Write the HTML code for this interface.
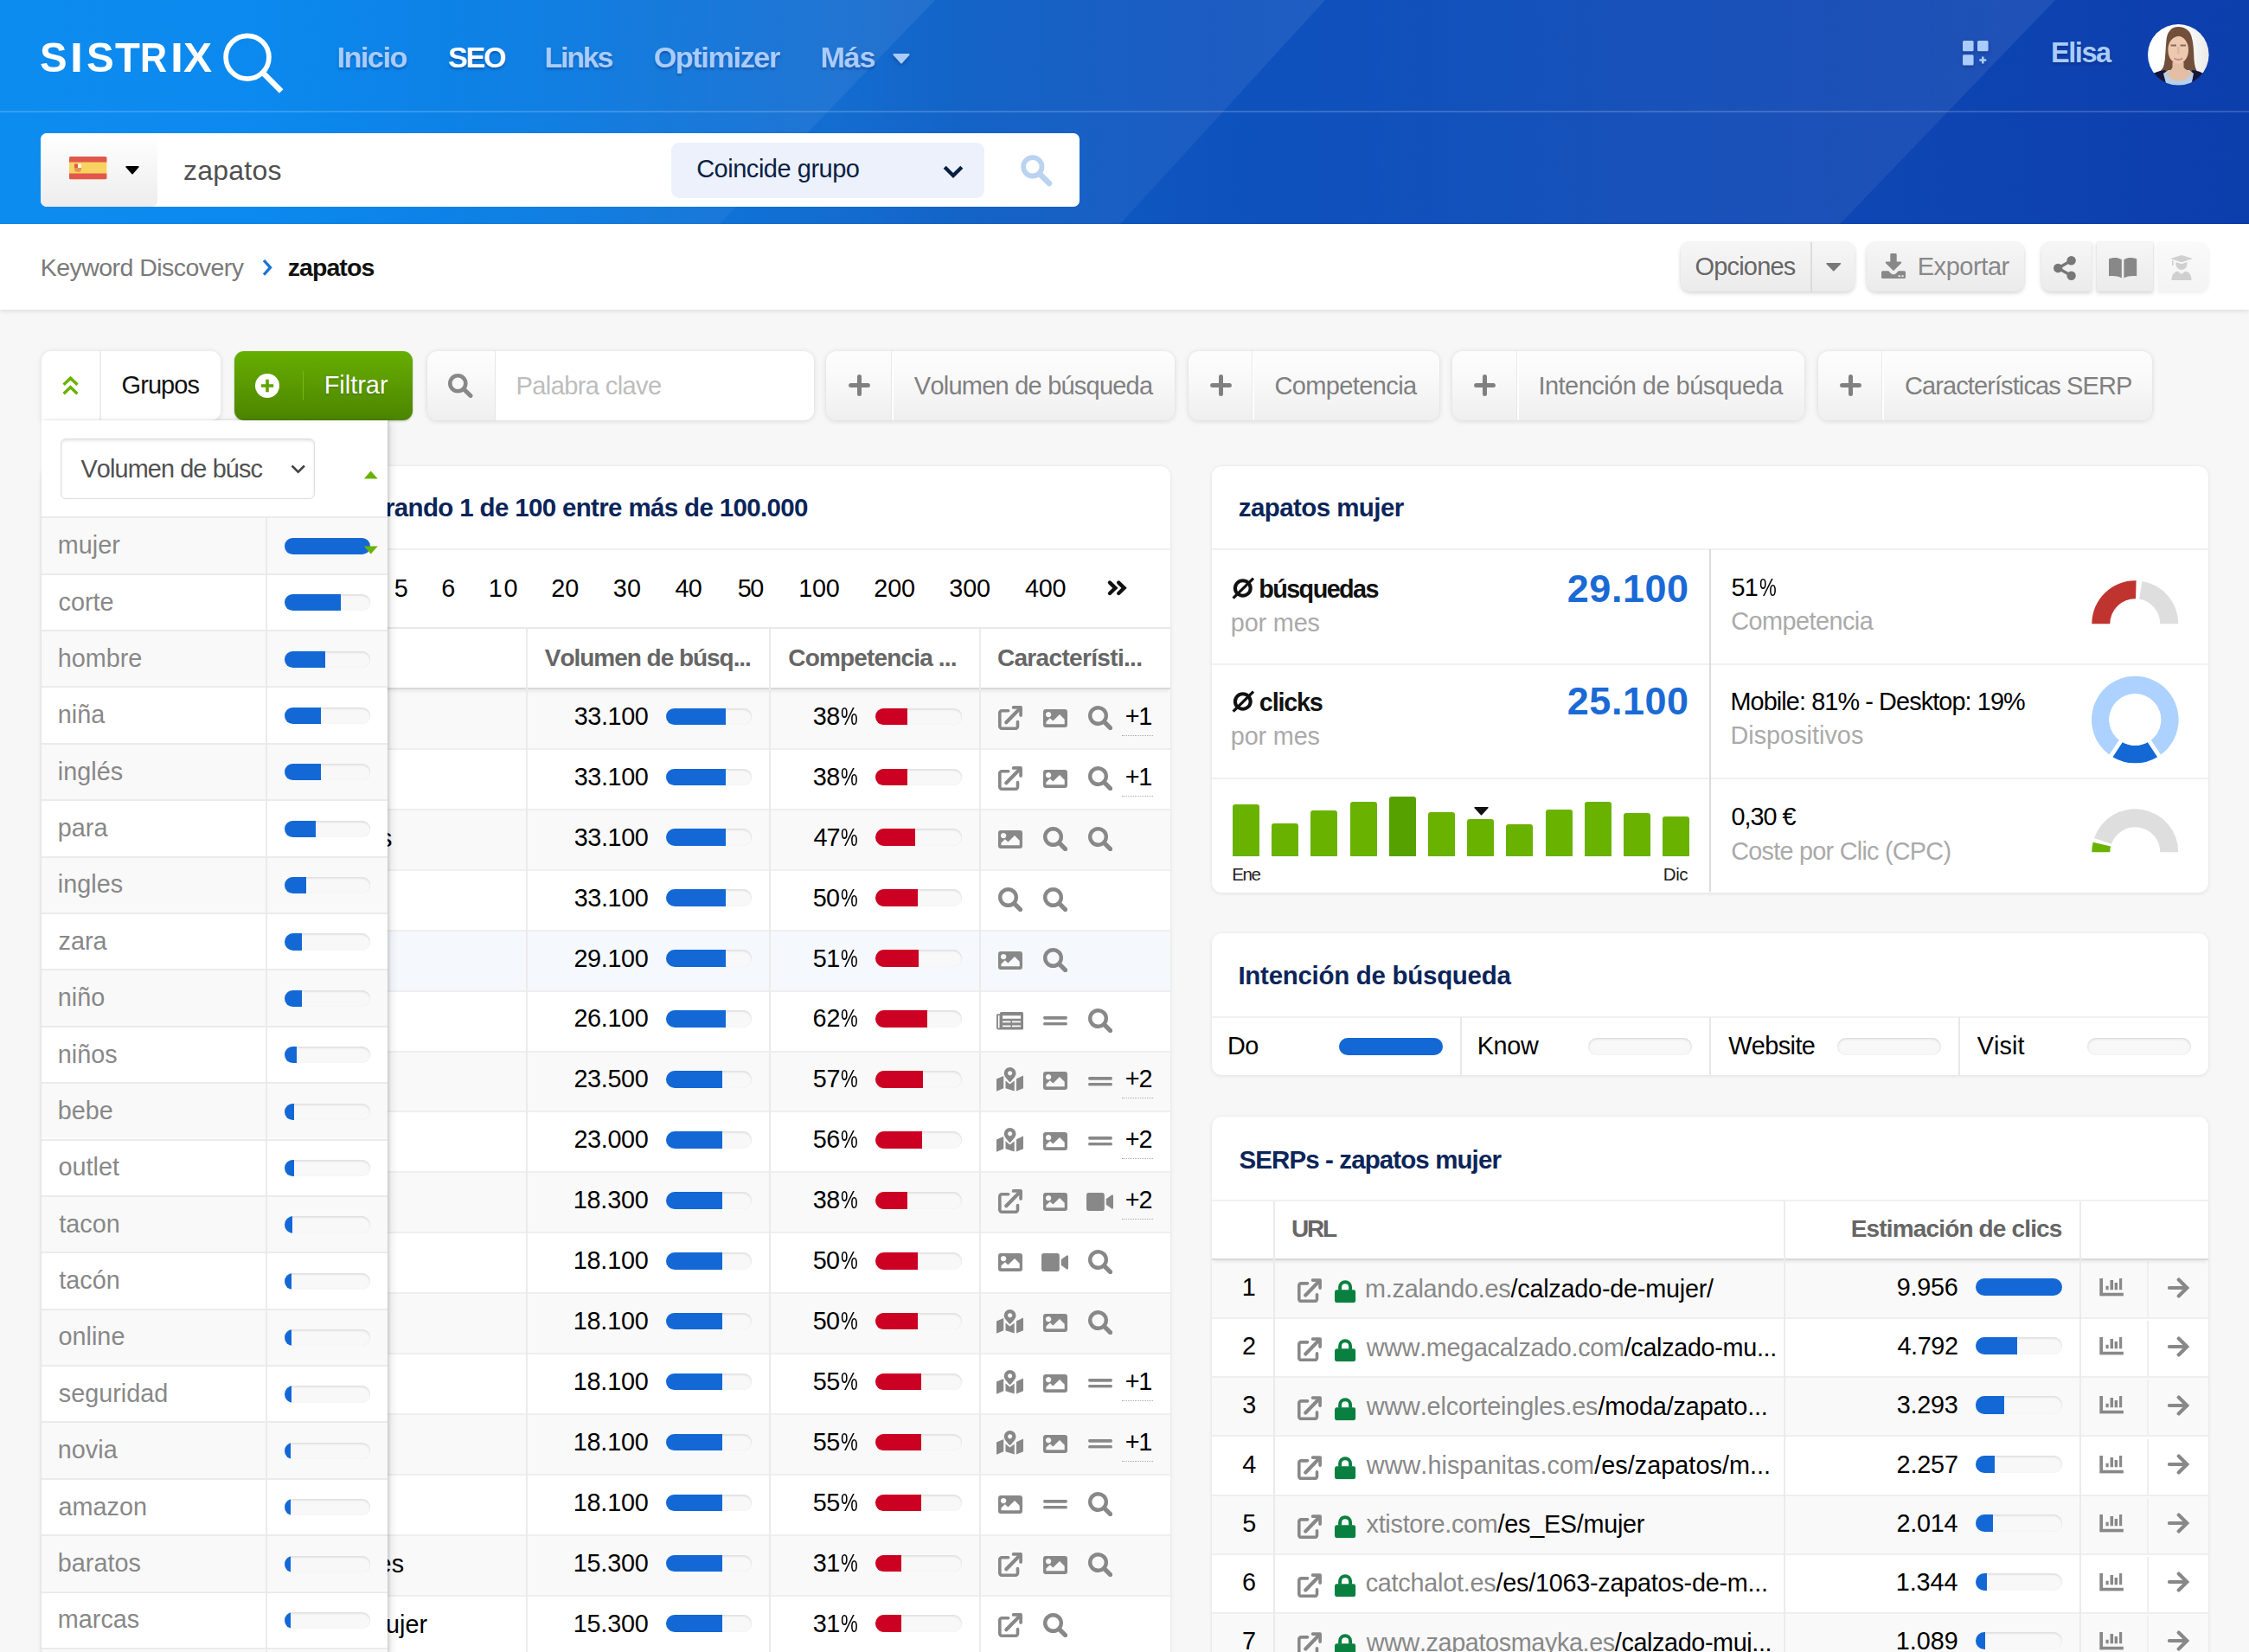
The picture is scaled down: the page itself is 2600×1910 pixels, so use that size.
<!DOCTYPE html>
<html><head><meta charset="utf-8"><title>SISTRIX</title>
<style>

*{box-sizing:border-box;margin:0;padding:0}
html,body{width:2600px;height:1910px;overflow:hidden}
body{background:#f7f7f7;font-family:"Liberation Sans",sans-serif;position:relative;font-kerning:none;color:#000}
.t{position:absolute;white-space:pre;line-height:1}
svg{overflow:visible}
.card{position:absolute;background:#fff;border-radius:11px;box-shadow:0 1px 5px rgba(0,0,0,.09),0 0 1px rgba(0,0,0,.08)}
.btn{position:absolute;border-radius:11px;background:linear-gradient(#f6f6f6,#ebebeb);box-shadow:0 2px 5px rgba(0,0,0,.17),0 0 1px rgba(0,0,0,.15)}
.fbtn{position:absolute;border-radius:12px;background:linear-gradient(#fdfdfd,#f9f9f9 40%,#efefef);box-shadow:0 1px 6px rgba(0,0,0,.13),0 0 1px rgba(0,0,0,.08)}
.bar{position:absolute;border-radius:10px;background:#f8f8f8;box-shadow:inset 0 2px 2px rgba(0,0,0,.085),inset 0 0 1px rgba(0,0,0,.1);overflow:hidden}
.bar i{position:absolute;left:0;top:0;bottom:0;display:block}
.hl{position:absolute;height:2px;background:#ededed}
.vl{position:absolute;width:2px;background:#ededed}

</style></head>
<body>
<svg width="0" height="0" style="position:absolute">
<defs>
<symbol id="ext" viewBox="0 0 28 28"><path d="M11.6 5.7H4.2a2.4 2.4 0 0 0-2.4 2.4v15.7a2.4 2.4 0 0 0 2.4 2.4h15.9a2.4 2.4 0 0 0 2.4-2.4V18.6" fill="none" stroke-width="3.6" stroke-linecap="round"/><path d="M9.3 19.3L24.6 3.6" fill="none" stroke-width="4.2" stroke-linecap="round"/><path d="M17.6 1.9h8.5v9" fill="none" stroke-width="3.7" stroke-linecap="round" stroke-linejoin="round"/></symbol>
<symbol id="img" viewBox="0 0 28 21"><path stroke="none" fill-rule="evenodd" d="M3 0h22a3 3 0 0 1 3 3v15a3 3 0 0 1-3 3H3a3 3 0 0 1-3-3V3a3 3 0 0 1 3-3zM6.1 2.9a3.2 3.2 0 1 0 .01 0zM3.4 17.2V14.6l4.5-4.3 3.5 3.3 7.6-7.5 5.7 5.6v5.5z"/></symbol>
<symbol id="srch" viewBox="0 0 28 28"><circle cx="11.5" cy="11.5" r="9.3" fill="none" stroke-width="4.4"/><path d="M18.6 18.6L25.6 25.6" fill="none" stroke-width="5.2" stroke-linecap="round"/></symbol>
<symbol id="news" viewBox="0 0 31 21"><path stroke="none" fill-rule="evenodd" d="M5.5 0h24a1.5 1.5 0 0 1 1.500 1.500v17.500a1.500 1.500 0 0 1-1.500 1.500H2.200A2.200 2.200 0 0 1 0 18.300V3.700A1.500 1.500 0 0 1 1.500 2.200H4V1.500A1.500 1.500 0 0 1 5.500 0zM1.900 4.100V18a.800.800 0 0 0 1.600 0V4.100zM7 4.300V7.800H28V4.300zM7 10.600V12.300H16.500V10.600zM18 10.600V12.300H28V10.600zM7 15.500V17.200H16.500V15.500zM18 15.500V17.200H28V15.500z"/></symbol>
<symbol id="eq" viewBox="0 0 28 11"><rect stroke="none" x="0" y="0" width="28" height="3.7" rx="1.300"/><rect stroke="none" x="0" y="7.100" width="28" height="3.700" rx="1.300"/></symbol>
<symbol id="map" viewBox="0 0 31 28"><path stroke="none" fill-rule="evenodd" d="M0 13.400L8.200 10V24.300L0 27.800zM10.500 15.600l5 3.800 5.200-3.800V27.600L10.500 24.300zM23 13.200L31 9.600V24.200L23 27.600zM15.600 0a6.900 6.900 0 0 1 6.900 6.900c0 3.300-4 7.300-6.900 10.300C12.700 14.200 8.700 10.200 8.700 6.900A6.900 6.900 0 0 1 15.600 0zM15.600 4.200a2.600 2.600 0 1 0 .01 0z"/></symbol>
<symbol id="vid" viewBox="0 0 31 21"><rect stroke="none" x="0" y="0" width="20.800" height="21" rx="2.800"/><path stroke="none" d="M22.700 7.200L29.300 2.500a1.100 1.100 0 0 1 1.700.9V17.600a1.100 1.100 0 0 1-1.700.9L22.700 13.800z"/></symbol>
<symbol id="chart" viewBox="0 0 28 21"><path stroke="none" d="M0 0H3.800V17.100H28V20.700H0zM7.300 8.900H10.500V13.500H7.300zM12.400 2H16V13.500H12.400zM17.600 5H21.100V13.500H17.600zM23.100 0H26.300V13.500H23.100z"/></symbol>
<symbol id="arrow" viewBox="0 0 25 24"><path d="M2 12H21.500M12.700 2.600L22.300 12L12.700 21.400" fill="none" stroke-width="4.200" stroke-linecap="round" stroke-linejoin="miter"/></symbol>
<symbol id="lock" viewBox="0 0 25 28"><rect stroke="none" x="0" y="12.400" width="24.600" height="15.200" rx="2.500"/><path d="M6.200 13V9.300a6.100 6.100 0 0 1 12.200 0V13" fill="none" stroke-width="4"/></symbol>
<symbol id="plus" viewBox="0 0 25 25"><path d="M12.500 2.600V22.400M2.600 12.500H22.400" fill="none" stroke-width="5" stroke-linecap="round"/></symbol>
</defs></svg>
<div style="position:absolute;left:0;top:0;width:2600px;height:259px;background:linear-gradient(90deg,rgb(13,140,240) 0%,rgb(12,137,238) 12%,rgb(10,125,227) 23%,rgb(18,108,208) 37%,rgb(14,96,198) 42.500%,rgb(14,82,190) 54%,rgb(15,75,183) 73%,rgb(12,62,172) 100%);overflow:hidden">
<svg width="2600" height="259" style="position:absolute;left:0;top:0">
<defs>
<linearGradient id="g1" x1="0" x2="1" y1="0" y2="0"><stop offset="0" stop-color="#fff" stop-opacity="0"/><stop offset="1" stop-color="#fff" stop-opacity=".07"/></linearGradient>
<linearGradient id="g2" x1="0" x2="1" y1="0" y2="0"><stop offset="0" stop-color="#fff" stop-opacity="0"/><stop offset="1" stop-color="#fff" stop-opacity=".075"/></linearGradient>
<linearGradient id="g3" x1="0" x2="1" y1="0" y2="0"><stop offset="0" stop-color="#fff" stop-opacity="0"/><stop offset="1" stop-color="#fff" stop-opacity=".08"/></linearGradient>
</defs>
<polygon points="380,0 1081,0 832,259 380,259" fill="url(#g1)"/>
<polygon points="900,0 1532,0 1295,259 900,259" fill="url(#g2)"/>
<polygon points="1500,0 2376,0 2127,259 1500,259" fill="url(#g3)"/>
</svg>
<div style="position:absolute;left:0;top:128px;width:2600px;height:2px;background:rgba(255,255,255,.17)"></div>
</div>
<span class="t" style="left:46.38px;top:42.36px;font-size:48.6px;font-weight:700;color:#fff;transform-origin:0 0;transform:scaleX(0.9739)">S</span>
<span class="t" style="left:81.30px;top:42.36px;font-size:48.6px;font-weight:700;color:#fff;transform-origin:0 0;transform:scaleX(1.1069)">I</span>
<span class="t" style="left:99.57px;top:42.36px;font-size:48.6px;font-weight:700;color:#fff;transform-origin:0 0;transform:scaleX(0.9808)">S</span>
<span class="t" style="left:132.53px;top:42.36px;font-size:48.6px;font-weight:700;color:#fff;transform-origin:0 0;transform:scaleX(0.9730)">T</span>
<span class="t" style="left:162.21px;top:42.36px;font-size:48.6px;font-weight:700;color:#fff;transform-origin:0 0;transform:scaleX(0.8846)">R</span>
<span class="t" style="left:196.50px;top:42.36px;font-size:48.6px;font-weight:700;color:#fff;transform-origin:0 0;transform:scaleX(1.1069)">I</span>
<span class="t" style="left:212.30px;top:42.36px;font-size:48.6px;font-weight:700;color:#fff;transform-origin:0 0;transform:scaleX(1.0208)">X</span>
<svg style="position:absolute;left:250px;top:30px" width="90" height="90"><circle cx="36" cy="36.200" r="24.900" fill="none" stroke="#fff" stroke-width="5.700"/><path d="M53.600 53.800L75.200 75.600" stroke="#fff" stroke-width="6.400" fill="none"/></svg>
<span class="t" style="left:389.39px;top:49.22px;font-size:34px;font-weight:700;color:#a9ccfc;letter-spacing:-1.388px;text-shadow:0 2px 3px rgba(0,20,90,.35);">Inicio</span>
<span class="t" style="left:517.98px;top:49.22px;font-size:34px;font-weight:700;color:#fff;letter-spacing:-2.195px;text-shadow:0 2px 3px rgba(0,20,90,.35);">SEO</span>
<span class="t" style="left:629.59px;top:49.22px;font-size:34px;font-weight:700;color:#a9ccfc;letter-spacing:-2.242px;text-shadow:0 2px 3px rgba(0,20,90,.35);">Links</span>
<span class="t" style="left:755.64px;top:49.22px;font-size:34px;font-weight:700;color:#a9ccfc;letter-spacing:-1.276px;text-shadow:0 2px 3px rgba(0,20,90,.35);">Optimizer</span>
<span class="t" style="left:948.39px;top:49.22px;font-size:34px;font-weight:700;color:#a9ccfc;letter-spacing:-1.080px;text-shadow:0 2px 3px rgba(0,20,90,.35);">Más</span>
<svg style="position:absolute;left:1032px;top:62px;filter:drop-shadow(0 2px 2px rgba(0,20,90,.3))" width="20" height="12"><path d="M1.500 0H18.500a1 1 0 0 1 .8 1.700L10.800 11.200a1.100 1.100 0 0 1-1.600 0L.7 1.700A1 1 0 0 1 1.500 0z" fill="#a9ccfc"/></svg>
<svg style="position:absolute;left:2268.800px;top:46.700px;filter:drop-shadow(0 2px 2px rgba(0,20,90,.3))" width="31" height="29" fill="#a9ccfc"><rect x="0" y="0" width="12.600" height="12.300" rx="1.500"/><rect x="17" y="0" width="12.600" height="12.300" rx="1.500"/><rect x="0" y="16.300" width="12.600" height="12.300" rx="1.500"/><path d="M23.300 18.500V26.500M19.300 22.500H27.300" stroke="#a9ccfc" stroke-width="2.600" fill="none"/></svg>
<span class="t" style="left:2370.89px;top:44.69px;font-size:32.5px;font-weight:700;color:#a9ccfc;letter-spacing:-1.400px;text-shadow:0 2px 3px rgba(0,20,90,.35);">Elisa</span>
<svg style="position:absolute;left:2482.500px;top:27.700px" width="70.600" height="70.600" viewBox="0 0 70.600 70.600">
<defs><filter id="avbl"><feGaussianBlur stdDeviation=".55"/></filter><clipPath id="avc"><circle cx="35.300" cy="35.300" r="35.300"/></clipPath>
<linearGradient id="avbg" x1="0" x2="1"><stop offset="0" stop-color="#fff"/><stop offset=".6" stop-color="#fdfdfd"/><stop offset="1" stop-color="#e9e9e9"/></linearGradient></defs>
<g clip-path="url(#avc)"><g filter="url(#avbl)">
<rect width="71" height="71" fill="url(#avbg)"/>
<path d="M35.500 3C27 3 22.500 9 21.500 18C20.500 28 20.500 38 19 46C18 51 15 54 12 56L28 60L45 60L58 56C55.500 53 54 48 53.500 41C53 31 53 22 50.500 14C48.500 7 43 3 35.500 3z" fill="#72503a"/>
<path d="M6 57C11 54.500 16 53.500 20 53L31 70H4z" fill="#15163a"/>
<path d="M64 57C60 54.500 55 53.500 51.500 53L42 70H67z" fill="#15163a"/>
<path d="M18 57L24 53L48 53L53 57L50 72H22z" fill="#b9d0ea"/>
<path d="M28.500 44H41.500V50C44 53 48 54.500 51 56C48 62 42 65.500 35 65.500C29 65.500 24 62 21 56.500C24 55 27 53.500 28.500 50z" fill="#e3bfa5"/>
<ellipse cx="35.200" cy="29.700" rx="11.800" ry="16" fill="#ecc9b0"/>
<path d="M23 24C24 15 29 11.500 35.500 11.500C41 11.500 46 15 47.500 24C46 18 42 14.500 36 13.500C30 14.500 25 18 23 24z" fill="#72503a"/>
<path d="M26.500 24.600h6.500M37.500 24.600h6.500" stroke="#7a5a48" stroke-width="2" opacity=".85"/><path d="M35.200 26V34.500" stroke="#d9b095" stroke-width="2.500" opacity=".7"/>
<path d="M30.500 39.500Q35.300 42.500 40 39.500" stroke="#d08a8a" stroke-width="2" fill="none"/>
</g></g></svg>
<div style="position:absolute;left:47px;top:154px;width:1201px;height:84.6px;background:#fff;border-radius:7px;overflow:hidden"><div style="position:absolute;left:0;top:0;width:134.500px;height:100%;background:linear-gradient(#fff,#f7f7f7 45%,#ededed);border-radius:7px"></div></div>
<svg style="position:absolute;left:80px;top:181.200px" width="43.400" height="26.200"><rect width="43.400" height="26.200" rx="1.500" fill="#f9d360"/><path d="M1.500 0H41.900a1.500 1.500 0 0 1 1.500 1.500V6.600H0V1.500A1.500 1.500 0 0 1 1.500 0zM0 19.600H43.400V24.700a1.500 1.500 0 0 1-1.500 1.500H1.500A1.500 1.500 0 0 1 0 24.700z" fill="#e2574c"/><path d="M6 8.500h4v4.500h-4z" fill="#e2574c"/><path d="M10 8.500h4v4.500h-4z" fill="#fff" opacity=".85"/><path d="M6 13h8v1.500a4 3.600 0 0 1-8 0z" fill="#e8954a"/></svg>
<svg style="position:absolute;left:145.400px;top:192.200px" width="16" height="10"><path d="M1 0H15a.8.800 0 0 1 .6 1.300L8.600 9.200a.8.800 0 0 1-1.200 0L.4 1.300A.8.800 0 0 1 1 0z" fill="#000"/></svg>
<span class="t" style="left:212.02px;top:181.01px;font-size:32px;color:#505050;letter-spacing:0.233px;">zapatos</span>
<div style="position:absolute;left:776px;top:165px;width:362.4px;height:63.5px;background:#ecf1fb;border-radius:9px"></div>
<span class="t" style="left:805.15px;top:180.65px;font-size:29px;color:#0a1f44;letter-spacing:-0.479px;">Coincide grupo</span>
<svg style="position:absolute;left:1090px;top:191px" width="24" height="15"><path d="M2.200 2.200L12 12L21.800 2.200" fill="none" stroke="#0a1f44" stroke-width="4.300"/></svg>
<svg style="position:absolute;left:1180px;top:179px" width="36" height="36"><circle cx="13.800" cy="13.800" r="10.700" fill="none" stroke="#b9d3f0" stroke-width="5.800"/><path d="M22.300 22.300L33 33" stroke="#b9d3f0" stroke-width="6.600" stroke-linecap="round" fill="none"/></svg>
<div style="position:absolute;left:0px;top:259px;width:2600px;height:99px;background:#fff;box-shadow:0 2px 5px rgba(0,0,0,.10)"></div>
<span class="t" style="left:46.72px;top:295.27px;font-size:28.5px;color:#7a7a7a;letter-spacing:-0.537px;">Keyword Discovery</span>
<svg style="position:absolute;left:302.600px;top:299px" width="12" height="21"><path d="M2 2L9.500 10.300L2 18.600" fill="none" stroke="#1a73d6" stroke-width="3.300"/></svg>
<span class="t" style="left:332.66px;top:295.27px;font-size:28.5px;font-weight:700;color:#111;letter-spacing:-0.923px;">zapatos</span>
<div class="btn" style="left:1943px;top:279.500px;width:201.300px;height:57.300px"><div style="position:absolute;left:150px;top:0;width:1.500px;height:100%;background:#dcdcdc"></div></div>
<span class="t" style="left:1959.39px;top:293.95px;font-size:29px;color:#666;letter-spacing:-0.794px;">Opciones</span>
<svg style="position:absolute;left:2110.700px;top:304.400px" width="18" height="10"><path d="M1 0H16.500a.8.800 0 0 1 .6 1.300L9.400 9.200a.8.800 0 0 1-1.200 0L.4 1.300A.8.800 0 0 1 1 0z" fill="#777"/></svg>
<div class="btn" style="left:2158.300px;top:279.500px;width:182px;height:57.300px"></div>
<svg style="position:absolute;left:2174.800px;top:293px" width="28" height="29" fill="#888"><path d="M11.500 0h5a1.200 1.200 0 0 1 1.200 1.200V9.500h4.600a1 1 0 0 1 .7 1.700L14.700 19.600a1 1 0 0 1-1.400 0L5 11.200a1 1 0 0 1 .7-1.700H10.300V1.200A1.200 1.200 0 0 1 11.500 0z"/><path fill-rule="evenodd" d="M1.500 20.300H8.300l2.600 2.600a4.400 4.400 0 0 0 6.200 0l2.600-2.600H26.500A1.500 1.500 0 0 1 28 21.800V27.500A1.500 1.500 0 0 1 26.500 29H1.500A1.500 1.500 0 0 1 0 27.500V21.800a1.500 1.500 0 0 1 1.500-1.500zM19.600 25.200v2h2.200v-2zM23.400 25.200v2h2.200v-2z"/></svg>
<span class="t" style="left:2216.68px;top:293.95px;font-size:29px;color:#888;letter-spacing:-0.431px;">Exportar</span>
<div class="btn" style="left:2360px;top:279.500px;width:57.600px;height:57.300px;border-radius:11px 0 0 11px"></div>
<div class="btn" style="left:2423.800px;top:279.500px;width:65.400px;height:57.300px;border-radius:0"></div>
<div class="btn" style="left:2495.400px;top:279.500px;width:58px;height:57.300px;border-radius:0 11px 11px 0;background:linear-gradient(#fafafa,#f4f4f4);box-shadow:0 2px 4px rgba(0,0,0,.07),0 0 1px rgba(0,0,0,.08)"></div>
<svg style="position:absolute;left:2373.700px;top:295.700px" width="26" height="28" fill="#777" stroke="#777"><circle cx="20.600" cy="5.200" r="5.200" stroke="none"/><circle cx="5.200" cy="14" r="5.200" stroke="none"/><circle cx="20.600" cy="22.800" r="5.200" stroke="none"/><path d="M20.600 5.200L5.200 14L20.600 22.800" fill="none" stroke-width="3.300"/></svg>
<svg style="position:absolute;left:2438.400px;top:297px" width="32.200" height="24.500" fill="#888"><path d="M0 2.300C4 .6 10 .1 14.800 3V24.500C10 21.800 4 21.600 0 22.300zM32.200 2.300C28.200.6 22.200.1 17.400 3V24.500C22.200 21.800 28.200 21.600 32.200 22.300z"/></svg>
<svg style="position:absolute;left:2509.400px;top:295px" width="26" height="29" fill="#d0d0d0"><path d="M13 0L26 4L13 8.200L0 4z"/><path d="M2 6V12H3.600V6.500z"/><path d="M6.500 8V10.500a6.500 6.500 0 0 0 13 0V8L13 10.200z"/><path d="M1.500 29C1.500 23 4 19.500 8.500 18.500L13 22L17.500 18.500C22 19.500 24.500 23 24.500 29z"/></svg>
<div class="btn" style="left:47.500px;top:406px;width:207.500px;height:79.5px;background:#fff;border-radius:11px 11px 11px 0;box-shadow:0 1px 6px rgba(0,0,0,.13)"><div style="position:absolute;left:67.500px;top:0;width:1.500px;height:100%;background:#eee"></div></div>
<svg style="position:absolute;left:71.500px;top:434.500px" width="19" height="23"><path d="M1.600 9.800L9.500 2.200L17.400 9.800M1.600 20.300L9.500 12.700L17.400 20.300" fill="none" stroke="#6ab200" stroke-width="3.400"/></svg>
<span class="t" style="left:140.55px;top:431.15px;font-size:29px;color:#111;letter-spacing:-0.931px;">Grupos</span>
<div style="position:absolute;left:271.400px;top:406px;width:206.100px;height:79.5px;border-radius:11px;background:linear-gradient(#66ae00,#5a9900 50%,#4c8400);box-shadow:0 1px 3px rgba(0,0,0,.2)"><div style="position:absolute;left:78.500px;top:23px;width:1.500px;height:33px;background:rgba(120,190,20,.9)"></div></div>
<svg style="position:absolute;left:295px;top:432px" width="28" height="28"><circle cx="14" cy="14" r="14" fill="#fff"/><path d="M14 6.800V21.200M6.800 14H21.200" stroke="#5fa300" stroke-width="3.600" fill="none"/></svg>
<span class="t" style="left:374.68px;top:431.15px;font-size:29px;color:#fff;letter-spacing:-0.033px;text-shadow:0 1px 2px rgba(0,0,0,.25);">Filtrar</span>
<div class="fbtn" style="left:494px;top:406px;width:446.500px;height:79.5px;overflow:hidden"><div style="position:absolute;left:79px;top:0;right:0;height:100%;background:#fff;box-shadow:-1px 0 0 #e6e6e6"></div></div>
<svg style="position:absolute;left:518px;top:432px" width="30" height="28"><circle cx="11.300" cy="11.300" r="9" fill="none" stroke="#888" stroke-width="4.600"/><path d="M18.200 18L26 25.500" stroke="#888" stroke-width="5.200" stroke-linecap="round" fill="none"/></svg>
<span class="t" style="left:596.48px;top:431.95px;font-size:29px;color:#bdbdbd;letter-spacing:-0.585px;">Palabra clave</span>
<div class="fbtn" style="left:955.2px;top:406px;width:402.5999999999999px;height:79.5px"><div style="position:absolute;left:75.79999999999995px;top:0;width:2px;height:100%;background:#fff;box-shadow:-1px 0 0 #e8e8e8"></div></div>
<svg style="position:absolute;left:981.10px;top:433.30px;" width="25" height="25" fill="#808080" stroke="#808080"><use href="#plus"/></svg>
<span class="t" style="left:1056.86px;top:431.95px;font-size:29px;color:#808080;letter-spacing:-0.778px;">Volumen de búsqueda</span>
<div class="fbtn" style="left:1373.7px;top:406px;width:290.29999999999995px;height:79.5px"><div style="position:absolute;left:74.29999999999995px;top:0;width:2px;height:100%;background:#fff;box-shadow:-1px 0 0 #e8e8e8"></div></div>
<svg style="position:absolute;left:1398.85px;top:433.30px;" width="25" height="25" fill="#808080" stroke="#808080"><use href="#plus"/></svg>
<span class="t" style="left:1473.45px;top:431.95px;font-size:29px;color:#808080;letter-spacing:-0.612px;">Competencia</span>
<div class="fbtn" style="left:1678.7px;top:406px;width:407.29999999999995px;height:79.5px"><div style="position:absolute;left:75.29999999999995px;top:0;width:2px;height:100%;background:#fff;box-shadow:-1px 0 0 #e8e8e8"></div></div>
<svg style="position:absolute;left:1704.35px;top:433.30px;" width="25" height="25" fill="#808080" stroke="#808080"><use href="#plus"/></svg>
<span class="t" style="left:1778.39px;top:431.95px;font-size:29px;color:#808080;letter-spacing:-0.529px;">Intención de búsqueda</span>
<div class="fbtn" style="left:2102px;top:406px;width:386px;height:79.5px"><div style="position:absolute;left:74px;top:0;width:2px;height:100%;background:#fff;box-shadow:-1px 0 0 #e8e8e8"></div></div>
<svg style="position:absolute;left:2127.00px;top:433.30px;" width="25" height="25" fill="#808080" stroke="#808080"><use href="#plus"/></svg>
<span class="t" style="left:2201.95px;top:431.95px;font-size:29px;color:#808080;letter-spacing:-0.899px;">Características SERP</span>
<div class="card" style="left:47.5px;top:538.500px;width:1305.8px;height:1420px"></div>
<span class="t" style="left:378.79px;top:572.23px;font-size:29.5px;font-weight:700;color:#0b2559;letter-spacing:-0.653px;">Mostrando 1 de 100 entre más de 100.000</span>
<div class="hl" style="left:47.5px;top:633.500px;width:1305.8px;background:#f1f1f1"></div>
<span class="t" style="left:455.65px;top:665.62px;font-size:28.8px;">5</span>
<span class="t" style="left:510.26px;top:665.62px;font-size:28.8px;">6</span>
<span class="t" style="left:564.84px;top:665.62px;font-size:28.8px;letter-spacing:1.700px;">10</span>
<span class="t" style="left:637.36px;top:665.62px;font-size:28.8px;letter-spacing:-0.020px;">20</span>
<span class="t" style="left:708.85px;top:665.62px;font-size:28.8px;letter-spacing:0.192px;">30</span>
<span class="t" style="left:780.42px;top:665.62px;font-size:28.8px;letter-spacing:-0.584px;">40</span>
<span class="t" style="left:852.75px;top:665.62px;font-size:28.8px;letter-spacing:-1.408px;">50</span>
<span class="t" style="left:923.14px;top:665.62px;font-size:28.8px;letter-spacing:-0.142px;">100</span>
<span class="t" style="left:1010.36px;top:665.62px;font-size:28.8px;letter-spacing:-0.202px;">200</span>
<span class="t" style="left:1097.35px;top:665.62px;font-size:28.8px;letter-spacing:-0.146px;">300</span>
<span class="t" style="left:1185.12px;top:665.62px;font-size:28.8px;letter-spacing:-0.334px;">400</span>
<svg style="position:absolute;left:1279.600px;top:671px" width="23" height="18"><path d="M3 2.600L9.400 8.800L3 15M13.200 2.600L19.600 8.800L13.200 15" fill="none" stroke="#111" stroke-width="4.400" stroke-linecap="round" stroke-linejoin="miter"/></svg>
<div class="hl" style="left:47.5px;top:725px;width:1305.8px;background:#e9e9e9"></div>
<span class="t" style="left:629.86px;top:747.10px;font-size:28px;font-weight:700;color:#666;letter-spacing:-1.039px;">Volumen de búsq...</span>
<span class="t" style="left:911.28px;top:747.10px;font-size:28px;font-weight:700;color:#666;letter-spacing:-0.834px;">Competencia ...</span>
<span class="t" style="left:1152.88px;top:747.10px;font-size:28px;font-weight:700;color:#666;letter-spacing:-0.663px;">Característi...</span>
<div style="position:absolute;left:47.5px;top:797.0px;width:1305.8px;height:69.92px;background:#f9f9f9;border-bottom:2px solid #efefef"></div>
<span class="t" style="left:663.75px;top:813.82px;font-size:28.8px;letter-spacing:-0.405px;">33.100</span>
<div class="bar" style="left:770px;top:818.6px;width:99px;height:19.700px"><i style="width:69.4px;background:#1368d6"></i></div>
<span class="t" style="left:939.85px;top:813.82px;font-size:28.8px;letter-spacing:-0.664px;">38</span>
<span class="t" style="left:972.02px;top:813.82px;font-size:28.8px;color:#000;transform-origin:0 0;transform:scaleX(0.7707)">%</span>
<div class="bar" style="left:1012.300px;top:818.6px;width:99.400px;height:19.700px"><i style="width:36.8px;background:#cc0022"></i></div>
<svg style="position:absolute;left:1153.60px;top:816.10px;" width="28" height="28" fill="#888" stroke="#888"><use href="#ext"/></svg>
<svg style="position:absolute;left:1205.60px;top:819.90px;" width="28" height="21" fill="#888" stroke="#888"><use href="#img"/></svg>
<svg style="position:absolute;left:1257.60px;top:816.10px;" width="28" height="28" fill="#888" stroke="#888"><use href="#srch"/></svg>
<span class="t" style="left:1300.86px;top:813.82px;font-size:28.8px;letter-spacing:-1.396px;">+1</span>
<div style="position:absolute;left:1297px;top:849.7px;width:36px;height:0;border-top:1.500px dotted #aaa"></div>
<div style="position:absolute;left:47.5px;top:866.9px;width:1305.8px;height:69.92px;background:#fff;border-bottom:2px solid #efefef"></div>
<span class="t" style="left:663.75px;top:883.74px;font-size:28.8px;letter-spacing:-0.405px;">33.100</span>
<div class="bar" style="left:770px;top:888.5px;width:99px;height:19.700px"><i style="width:69.4px;background:#1368d6"></i></div>
<span class="t" style="left:939.85px;top:883.74px;font-size:28.8px;letter-spacing:-0.664px;">38</span>
<span class="t" style="left:972.02px;top:883.74px;font-size:28.8px;color:#000;transform-origin:0 0;transform:scaleX(0.7707)">%</span>
<div class="bar" style="left:1012.300px;top:888.5px;width:99.400px;height:19.700px"><i style="width:36.8px;background:#cc0022"></i></div>
<svg style="position:absolute;left:1153.60px;top:886.02px;" width="28" height="28" fill="#888" stroke="#888"><use href="#ext"/></svg>
<svg style="position:absolute;left:1205.60px;top:889.82px;" width="28" height="21" fill="#888" stroke="#888"><use href="#img"/></svg>
<svg style="position:absolute;left:1257.60px;top:886.02px;" width="28" height="28" fill="#888" stroke="#888"><use href="#srch"/></svg>
<span class="t" style="left:1300.86px;top:883.74px;font-size:28.8px;letter-spacing:-1.396px;">+1</span>
<div style="position:absolute;left:1297px;top:919.6px;width:36px;height:0;border-top:1.500px dotted #aaa"></div>
<div style="position:absolute;left:47.5px;top:936.8px;width:1305.8px;height:69.92px;background:#f9f9f9;border-bottom:2px solid #efefef"></div>
<span class="t" style="left:663.75px;top:953.66px;font-size:28.8px;letter-spacing:-0.405px;">33.100</span>
<div class="bar" style="left:770px;top:958.4px;width:99px;height:19.700px"><i style="width:69.4px;background:#1368d6"></i></div>
<span class="t" style="left:940.42px;top:953.66px;font-size:28.8px;letter-spacing:-0.952px;">47</span>
<span class="t" style="left:972.02px;top:953.66px;font-size:28.8px;color:#000;transform-origin:0 0;transform:scaleX(0.7707)">%</span>
<div class="bar" style="left:1012.300px;top:958.4px;width:99.400px;height:19.700px"><i style="width:45.5px;background:#cc0022"></i></div>
<svg style="position:absolute;left:1153.60px;top:959.74px;" width="28" height="21" fill="#888" stroke="#888"><use href="#img"/></svg>
<svg style="position:absolute;left:1205.60px;top:955.94px;" width="28" height="28" fill="#888" stroke="#888"><use href="#srch"/></svg>
<svg style="position:absolute;left:1257.60px;top:955.94px;" width="28" height="28" fill="#888" stroke="#888"><use href="#srch"/></svg>
<span class="t" style="left:439.11px;top:955.36px;font-size:28.8px;">s</span>
<div style="position:absolute;left:47.5px;top:1006.8px;width:1305.8px;height:69.92px;background:#fff;border-bottom:2px solid #efefef"></div>
<span class="t" style="left:663.75px;top:1023.58px;font-size:28.8px;letter-spacing:-0.405px;">33.100</span>
<div class="bar" style="left:770px;top:1028.4px;width:99px;height:19.700px"><i style="width:69.4px;background:#1368d6"></i></div>
<span class="t" style="left:939.85px;top:1023.58px;font-size:28.8px;letter-spacing:-0.808px;">50</span>
<span class="t" style="left:972.02px;top:1023.58px;font-size:28.8px;color:#000;transform-origin:0 0;transform:scaleX(0.7707)">%</span>
<div class="bar" style="left:1012.300px;top:1028.4px;width:99.400px;height:19.700px"><i style="width:48.4px;background:#cc0022"></i></div>
<svg style="position:absolute;left:1153.60px;top:1025.86px;" width="28" height="28" fill="#888" stroke="#888"><use href="#srch"/></svg>
<svg style="position:absolute;left:1205.60px;top:1025.86px;" width="28" height="28" fill="#888" stroke="#888"><use href="#srch"/></svg>
<div style="position:absolute;left:47.5px;top:1076.7px;width:1305.8px;height:69.92px;background:#f5f8fc;border-bottom:2px solid #efefef"></div>
<span class="t" style="left:663.46px;top:1093.50px;font-size:28.8px;letter-spacing:-0.347px;">29.100</span>
<div class="bar" style="left:770px;top:1098.3px;width:99px;height:19.700px"><i style="width:69.4px;background:#1368d6"></i></div>
<span class="t" style="left:939.85px;top:1093.50px;font-size:28.8px;letter-spacing:-0.520px;">51</span>
<span class="t" style="left:972.02px;top:1093.50px;font-size:28.8px;color:#000;transform-origin:0 0;transform:scaleX(0.7707)">%</span>
<div class="bar" style="left:1012.300px;top:1098.3px;width:99.400px;height:19.700px"><i style="width:49.4px;background:#cc0022"></i></div>
<svg style="position:absolute;left:1153.60px;top:1099.58px;" width="28" height="21" fill="#888" stroke="#888"><use href="#img"/></svg>
<svg style="position:absolute;left:1205.60px;top:1095.78px;" width="28" height="28" fill="#888" stroke="#888"><use href="#srch"/></svg>
<div style="position:absolute;left:47.5px;top:1146.6px;width:1305.8px;height:69.92px;background:#fff;border-bottom:2px solid #efefef"></div>
<span class="t" style="left:663.46px;top:1163.42px;font-size:28.8px;letter-spacing:-0.347px;">26.100</span>
<div class="bar" style="left:770px;top:1168.2px;width:99px;height:19.700px"><i style="width:69px;background:#1368d6"></i></div>
<span class="t" style="left:939.56px;top:1163.42px;font-size:28.8px;letter-spacing:-0.088px;">62</span>
<span class="t" style="left:972.02px;top:1163.42px;font-size:28.8px;color:#000;transform-origin:0 0;transform:scaleX(0.7707)">%</span>
<div class="bar" style="left:1012.300px;top:1168.2px;width:99.400px;height:19.700px"><i style="width:60.0px;background:#cc0022"></i></div>
<svg style="position:absolute;left:1152.10px;top:1169.50px;" width="31" height="21" fill="#888" stroke="#888"><use href="#news"/></svg>
<svg style="position:absolute;left:1205.60px;top:1174.60px;" width="28" height="10.8" fill="#888" stroke="#888"><use href="#eq"/></svg>
<svg style="position:absolute;left:1257.60px;top:1165.70px;" width="28" height="28" fill="#888" stroke="#888"><use href="#srch"/></svg>
<div style="position:absolute;left:47.5px;top:1216.5px;width:1305.8px;height:69.92px;background:#f9f9f9;border-bottom:2px solid #efefef"></div>
<span class="t" style="left:663.46px;top:1233.34px;font-size:28.8px;letter-spacing:-0.347px;">23.500</span>
<div class="bar" style="left:770px;top:1238.1px;width:99px;height:19.700px"><i style="width:65px;background:#1368d6"></i></div>
<span class="t" style="left:939.85px;top:1233.34px;font-size:28.8px;letter-spacing:-0.376px;">57</span>
<span class="t" style="left:972.02px;top:1233.34px;font-size:28.8px;color:#000;transform-origin:0 0;transform:scaleX(0.7707)">%</span>
<div class="bar" style="left:1012.300px;top:1238.1px;width:99.400px;height:19.700px"><i style="width:55.2px;background:#cc0022"></i></div>
<svg style="position:absolute;left:1152.10px;top:1234.42px;" width="31" height="28" fill="#888" stroke="#888"><use href="#map"/></svg>
<svg style="position:absolute;left:1205.60px;top:1239.42px;" width="28" height="21" fill="#888" stroke="#888"><use href="#img"/></svg>
<svg style="position:absolute;left:1257.60px;top:1244.52px;" width="28" height="10.8" fill="#888" stroke="#888"><use href="#eq"/></svg>
<span class="t" style="left:1300.86px;top:1233.34px;font-size:28.8px;letter-spacing:-1.252px;">+2</span>
<div style="position:absolute;left:1297px;top:1269.2px;width:36px;height:0;border-top:1.500px dotted #aaa"></div>
<div style="position:absolute;left:47.5px;top:1286.4px;width:1305.8px;height:69.92px;background:#fff;border-bottom:2px solid #efefef"></div>
<span class="t" style="left:663.46px;top:1303.26px;font-size:28.8px;letter-spacing:-0.347px;">23.000</span>
<div class="bar" style="left:770px;top:1308.0px;width:99px;height:19.700px"><i style="width:65px;background:#1368d6"></i></div>
<span class="t" style="left:939.85px;top:1303.26px;font-size:28.8px;letter-spacing:-0.664px;">56</span>
<span class="t" style="left:972.02px;top:1303.26px;font-size:28.8px;color:#000;transform-origin:0 0;transform:scaleX(0.7707)">%</span>
<div class="bar" style="left:1012.300px;top:1308.0px;width:99.400px;height:19.700px"><i style="width:54.2px;background:#cc0022"></i></div>
<svg style="position:absolute;left:1152.10px;top:1304.34px;" width="31" height="28" fill="#888" stroke="#888"><use href="#map"/></svg>
<svg style="position:absolute;left:1205.60px;top:1309.34px;" width="28" height="21" fill="#888" stroke="#888"><use href="#img"/></svg>
<svg style="position:absolute;left:1257.60px;top:1314.44px;" width="28" height="10.8" fill="#888" stroke="#888"><use href="#eq"/></svg>
<span class="t" style="left:1300.86px;top:1303.26px;font-size:28.8px;letter-spacing:-1.252px;">+2</span>
<div style="position:absolute;left:1297px;top:1339.1px;width:36px;height:0;border-top:1.500px dotted #aaa"></div>
<div style="position:absolute;left:47.5px;top:1356.4px;width:1305.8px;height:69.92px;background:#f9f9f9;border-bottom:2px solid #efefef"></div>
<span class="t" style="left:662.74px;top:1373.18px;font-size:28.8px;letter-spacing:-0.203px;">18.300</span>
<div class="bar" style="left:770px;top:1378.0px;width:99px;height:19.700px"><i style="width:65px;background:#1368d6"></i></div>
<span class="t" style="left:939.85px;top:1373.18px;font-size:28.8px;letter-spacing:-0.664px;">38</span>
<span class="t" style="left:972.02px;top:1373.18px;font-size:28.8px;color:#000;transform-origin:0 0;transform:scaleX(0.7707)">%</span>
<div class="bar" style="left:1012.300px;top:1378.0px;width:99.400px;height:19.700px"><i style="width:36.8px;background:#cc0022"></i></div>
<svg style="position:absolute;left:1153.60px;top:1375.46px;" width="28" height="28" fill="#888" stroke="#888"><use href="#ext"/></svg>
<svg style="position:absolute;left:1205.60px;top:1379.26px;" width="28" height="21" fill="#888" stroke="#888"><use href="#img"/></svg>
<svg style="position:absolute;left:1256.10px;top:1379.26px;" width="31" height="21" fill="#888" stroke="#888"><use href="#vid"/></svg>
<span class="t" style="left:1300.86px;top:1373.18px;font-size:28.8px;letter-spacing:-1.252px;">+2</span>
<div style="position:absolute;left:1297px;top:1409.1px;width:36px;height:0;border-top:1.500px dotted #aaa"></div>
<div style="position:absolute;left:47.5px;top:1426.3px;width:1305.8px;height:69.92px;background:#fff;border-bottom:2px solid #efefef"></div>
<span class="t" style="left:662.74px;top:1443.10px;font-size:28.8px;letter-spacing:-0.203px;">18.100</span>
<div class="bar" style="left:770px;top:1447.9px;width:99px;height:19.700px"><i style="width:65px;background:#1368d6"></i></div>
<span class="t" style="left:939.85px;top:1443.10px;font-size:28.8px;letter-spacing:-0.808px;">50</span>
<span class="t" style="left:972.02px;top:1443.10px;font-size:28.8px;color:#000;transform-origin:0 0;transform:scaleX(0.7707)">%</span>
<div class="bar" style="left:1012.300px;top:1447.9px;width:99.400px;height:19.700px"><i style="width:48.4px;background:#cc0022"></i></div>
<svg style="position:absolute;left:1153.60px;top:1449.18px;" width="28" height="21" fill="#888" stroke="#888"><use href="#img"/></svg>
<svg style="position:absolute;left:1204.10px;top:1449.18px;" width="31" height="21" fill="#888" stroke="#888"><use href="#vid"/></svg>
<svg style="position:absolute;left:1257.60px;top:1445.38px;" width="28" height="28" fill="#888" stroke="#888"><use href="#srch"/></svg>
<div style="position:absolute;left:47.5px;top:1496.2px;width:1305.8px;height:69.92px;background:#f9f9f9;border-bottom:2px solid #efefef"></div>
<span class="t" style="left:662.74px;top:1513.02px;font-size:28.8px;letter-spacing:-0.203px;">18.100</span>
<div class="bar" style="left:770px;top:1517.8px;width:99px;height:19.700px"><i style="width:65px;background:#1368d6"></i></div>
<span class="t" style="left:939.85px;top:1513.02px;font-size:28.8px;letter-spacing:-0.808px;">50</span>
<span class="t" style="left:972.02px;top:1513.02px;font-size:28.8px;color:#000;transform-origin:0 0;transform:scaleX(0.7707)">%</span>
<div class="bar" style="left:1012.300px;top:1517.8px;width:99.400px;height:19.700px"><i style="width:48.4px;background:#cc0022"></i></div>
<svg style="position:absolute;left:1152.10px;top:1514.10px;" width="31" height="28" fill="#888" stroke="#888"><use href="#map"/></svg>
<svg style="position:absolute;left:1205.60px;top:1519.10px;" width="28" height="21" fill="#888" stroke="#888"><use href="#img"/></svg>
<svg style="position:absolute;left:1257.60px;top:1515.30px;" width="28" height="28" fill="#888" stroke="#888"><use href="#srch"/></svg>
<div style="position:absolute;left:47.5px;top:1566.1px;width:1305.8px;height:69.92px;background:#fff;border-bottom:2px solid #efefef"></div>
<span class="t" style="left:662.74px;top:1582.94px;font-size:28.8px;letter-spacing:-0.203px;">18.100</span>
<div class="bar" style="left:770px;top:1587.7px;width:99px;height:19.700px"><i style="width:65px;background:#1368d6"></i></div>
<span class="t" style="left:939.85px;top:1582.94px;font-size:28.8px;letter-spacing:-0.664px;">55</span>
<span class="t" style="left:972.02px;top:1582.94px;font-size:28.8px;color:#000;transform-origin:0 0;transform:scaleX(0.7707)">%</span>
<div class="bar" style="left:1012.300px;top:1587.7px;width:99.400px;height:19.700px"><i style="width:53.2px;background:#cc0022"></i></div>
<svg style="position:absolute;left:1152.10px;top:1584.02px;" width="31" height="28" fill="#888" stroke="#888"><use href="#map"/></svg>
<svg style="position:absolute;left:1205.60px;top:1589.02px;" width="28" height="21" fill="#888" stroke="#888"><use href="#img"/></svg>
<svg style="position:absolute;left:1257.60px;top:1594.12px;" width="28" height="10.8" fill="#888" stroke="#888"><use href="#eq"/></svg>
<span class="t" style="left:1300.86px;top:1582.94px;font-size:28.8px;letter-spacing:-1.396px;">+1</span>
<div style="position:absolute;left:1297px;top:1618.8px;width:36px;height:0;border-top:1.500px dotted #aaa"></div>
<div style="position:absolute;left:47.5px;top:1636.0px;width:1305.8px;height:69.92px;background:#f9f9f9;border-bottom:2px solid #efefef"></div>
<span class="t" style="left:662.74px;top:1652.86px;font-size:28.8px;letter-spacing:-0.203px;">18.100</span>
<div class="bar" style="left:770px;top:1657.6px;width:99px;height:19.700px"><i style="width:65px;background:#1368d6"></i></div>
<span class="t" style="left:939.85px;top:1652.86px;font-size:28.8px;letter-spacing:-0.664px;">55</span>
<span class="t" style="left:972.02px;top:1652.86px;font-size:28.8px;color:#000;transform-origin:0 0;transform:scaleX(0.7707)">%</span>
<div class="bar" style="left:1012.300px;top:1657.6px;width:99.400px;height:19.700px"><i style="width:53.2px;background:#cc0022"></i></div>
<svg style="position:absolute;left:1152.10px;top:1653.94px;" width="31" height="28" fill="#888" stroke="#888"><use href="#map"/></svg>
<svg style="position:absolute;left:1205.60px;top:1658.94px;" width="28" height="21" fill="#888" stroke="#888"><use href="#img"/></svg>
<svg style="position:absolute;left:1257.60px;top:1664.04px;" width="28" height="10.8" fill="#888" stroke="#888"><use href="#eq"/></svg>
<span class="t" style="left:1300.86px;top:1652.86px;font-size:28.8px;letter-spacing:-1.396px;">+1</span>
<div style="position:absolute;left:1297px;top:1688.7px;width:36px;height:0;border-top:1.500px dotted #aaa"></div>
<div style="position:absolute;left:47.5px;top:1706.0px;width:1305.8px;height:69.92px;background:#fff;border-bottom:2px solid #efefef"></div>
<span class="t" style="left:662.74px;top:1722.78px;font-size:28.8px;letter-spacing:-0.203px;">18.100</span>
<div class="bar" style="left:770px;top:1727.6px;width:99px;height:19.700px"><i style="width:65px;background:#1368d6"></i></div>
<span class="t" style="left:939.85px;top:1722.78px;font-size:28.8px;letter-spacing:-0.664px;">55</span>
<span class="t" style="left:972.02px;top:1722.78px;font-size:28.8px;color:#000;transform-origin:0 0;transform:scaleX(0.7707)">%</span>
<div class="bar" style="left:1012.300px;top:1727.6px;width:99.400px;height:19.700px"><i style="width:53.2px;background:#cc0022"></i></div>
<svg style="position:absolute;left:1153.60px;top:1728.86px;" width="28" height="21" fill="#888" stroke="#888"><use href="#img"/></svg>
<svg style="position:absolute;left:1205.60px;top:1733.96px;" width="28" height="10.8" fill="#888" stroke="#888"><use href="#eq"/></svg>
<svg style="position:absolute;left:1257.60px;top:1725.06px;" width="28" height="28" fill="#888" stroke="#888"><use href="#srch"/></svg>
<div style="position:absolute;left:47.5px;top:1775.9px;width:1305.8px;height:69.92px;background:#f9f9f9;border-bottom:2px solid #efefef"></div>
<span class="t" style="left:662.74px;top:1792.70px;font-size:28.8px;letter-spacing:-0.203px;">15.300</span>
<div class="bar" style="left:770px;top:1797.5px;width:99px;height:19.700px"><i style="width:65px;background:#1368d6"></i></div>
<span class="t" style="left:939.85px;top:1792.70px;font-size:28.8px;letter-spacing:-0.520px;">31</span>
<span class="t" style="left:972.02px;top:1792.70px;font-size:28.8px;color:#000;transform-origin:0 0;transform:scaleX(0.7707)">%</span>
<div class="bar" style="left:1012.300px;top:1797.5px;width:99.400px;height:19.700px"><i style="width:30.0px;background:#cc0022"></i></div>
<svg style="position:absolute;left:1153.60px;top:1794.98px;" width="28" height="28" fill="#888" stroke="#888"><use href="#ext"/></svg>
<svg style="position:absolute;left:1205.60px;top:1798.78px;" width="28" height="21" fill="#888" stroke="#888"><use href="#img"/></svg>
<svg style="position:absolute;left:1257.60px;top:1794.98px;" width="28" height="28" fill="#888" stroke="#888"><use href="#srch"/></svg>
<span class="t" style="left:364.62px;top:1794.40px;font-size:28.8px;">mujeres</span>
<div style="position:absolute;left:47.5px;top:1845.8px;width:1305.8px;height:69.92px;background:#fff;border-bottom:2px solid #efefef"></div>
<span class="t" style="left:662.74px;top:1862.62px;font-size:28.8px;letter-spacing:-0.203px;">15.300</span>
<div class="bar" style="left:770px;top:1867.4px;width:99px;height:19.700px"><i style="width:65px;background:#1368d6"></i></div>
<span class="t" style="left:939.85px;top:1862.62px;font-size:28.8px;letter-spacing:-0.520px;">31</span>
<span class="t" style="left:972.02px;top:1862.62px;font-size:28.8px;color:#000;transform-origin:0 0;transform:scaleX(0.7707)">%</span>
<div class="bar" style="left:1012.300px;top:1867.4px;width:99.400px;height:19.700px"><i style="width:30.0px;background:#cc0022"></i></div>
<svg style="position:absolute;left:1153.60px;top:1864.90px;" width="28" height="28" fill="#888" stroke="#888"><use href="#ext"/></svg>
<svg style="position:absolute;left:1205.60px;top:1864.90px;" width="28" height="28" fill="#888" stroke="#888"><use href="#srch"/></svg>
<span class="t" style="left:313.21px;top:1864.32px;font-size:28.8px;">zapatos mujer</span>
<div style="position:absolute;left:47.5px;top:726.5px;width:1305.8px;height:70.5px;background:#fff;box-shadow:0 4px 4px -2px rgba(0,0,0,.08);border-bottom:2px solid #d9d9d9"></div>
<span class="t" style="left:629.86px;top:747.10px;font-size:28px;font-weight:700;color:#666;letter-spacing:-1.039px;">Volumen de búsq...</span>
<span class="t" style="left:911.28px;top:747.10px;font-size:28px;font-weight:700;color:#666;letter-spacing:-0.834px;">Competencia ...</span>
<span class="t" style="left:1152.88px;top:747.10px;font-size:28px;font-weight:700;color:#666;letter-spacing:-0.663px;">Característi...</span>
<div class="vl" style="left:607.9px;top:726.5px;height:1200px;background:#ebebeb"></div>
<div class="vl" style="left:889.4px;top:726.5px;height:1200px;background:#ebebeb"></div>
<div class="vl" style="left:1131.7px;top:726.5px;height:1200px;background:#ebebeb"></div>
<div class="card" style="left:1400.6px;top:538.500px;width:1152.6px;height:493px"></div>
<span class="t" style="left:1431.82px;top:572.23px;font-size:29.5px;font-weight:700;color:#0b2559;letter-spacing:-0.580px;">zapatos mujer</span>
<div class="hl" style="left:1400.6px;top:633.5px;width:1152.6px;background:#f1f1f1"></div>
<div class="hl" style="left:1400.6px;top:766.5px;width:1152.6px;background:#f1f1f1"></div>
<div class="hl" style="left:1400.6px;top:898.8px;width:1152.6px;background:#f1f1f1"></div>
<div class="vl" style="left:1975.800px;top:635px;height:396px;background:#dcdcdc"></div>
<svg style="position:absolute;left:1423px;top:665.4px" width="30" height="30"><ellipse cx="13.800" cy="15" rx="8.900" ry="8.700" fill="none" stroke="#111" stroke-width="4.100"/><path d="M2.600 26.600L26 3.600" stroke="#111" stroke-width="3.300" fill="none"/></svg>
<span class="t" style="left:1455.13px;top:666.82px;font-size:28.8px;font-weight:700;color:#111;letter-spacing:-1.569px;">búsquedas</span>
<span class="t" style="left:1422.83px;top:705.92px;font-size:28.8px;color:#aaa;letter-spacing:-0.155px;">por mes</span>
<span class="t" style="left:1811.83px;top:658.11px;font-size:45px;font-weight:700;color:#1a6ad6;letter-spacing:0.500px;">29.100</span>
<svg style="position:absolute;left:1423px;top:796.0px" width="30" height="30"><ellipse cx="13.800" cy="15" rx="8.900" ry="8.700" fill="none" stroke="#111" stroke-width="4.100"/><path d="M2.600 26.600L26 3.600" stroke="#111" stroke-width="3.300" fill="none"/></svg>
<span class="t" style="left:1455.85px;top:797.52px;font-size:28.8px;font-weight:700;color:#111;letter-spacing:-1.212px;">clicks</span>
<span class="t" style="left:1422.83px;top:836.62px;font-size:28.8px;color:#aaa;letter-spacing:-0.155px;">por mes</span>
<span class="t" style="left:1811.83px;top:788.21px;font-size:45px;font-weight:700;color:#1a6ad6;letter-spacing:0.500px;">25.100</span>
<span class="t" style="left:2001.55px;top:664.82px;font-size:28.8px;letter-spacing:-0.720px;">51</span>
<span class="t" style="left:2033.52px;top:664.82px;font-size:28.8px;color:#000;transform-origin:0 0;transform:scaleX(0.7707)">%</span>
<span class="t" style="left:2001.26px;top:703.82px;font-size:28.8px;color:#aaa;letter-spacing:-0.525px;">Competencia</span>
<span class="t" style="left:2000.40px;top:797.22px;font-size:28.8px;letter-spacing:-0.882px;">Mobile: 81% - Desktop: 19%</span>
<span class="t" style="left:2000.40px;top:835.62px;font-size:28.8px;color:#aaa;letter-spacing:0.023px;">Dispositivos</span>
<span class="t" style="left:2001.55px;top:930.42px;font-size:28.8px;letter-spacing:-1.036px;">0,30 €</span>
<span class="t" style="left:2001.26px;top:970.32px;font-size:28.8px;color:#aaa;letter-spacing:-0.742px;">Coste por Clic (CPC)</span>
<svg style="position:absolute;left:0;top:0" width="2600" height="1100"><path d="M2418.30 721.20A50 50 0 0 1 2469.61 671.22L2469.06 692.21A29 29 0 0 0 2439.30 721.20Z" fill="#c0342f"/><path d="M2476.55 671.89A50 50 0 0 1 2518.30 721.20L2497.30 721.20A29 29 0 0 0 2473.09 692.60Z" fill="#dedede"/><path d="M2440.03 873.60A50.3 50.3 0 1 1 2496.57 873.60L2485.16 856.81A30 30 0 1 0 2451.44 856.81Z" fill="#add2ff"/><path d="M2442.02 874.89A50.3 50.3 0 0 0 2494.58 874.89L2483.97 857.58A30 30 0 0 1 2452.63 857.58Z" fill="#1368d6"/><path d="M2468.3 832L2435.18 882.03M2468.3 832L2501.42 882.03" stroke="#fff" stroke-width="4.800" fill="none"/><circle cx="2468.3" cy="832" r="29.800" fill="#fff"/><path d="M2418.30 985.30A50 50 0 0 1 2419.68 973.63L2440.10 978.53A29 29 0 0 0 2439.30 985.30Z" fill="#6ab200"/><path d="M2421.02 969.02A50 50 0 0 1 2518.30 985.30L2497.30 985.30A29 29 0 0 0 2440.88 975.86Z" fill="#dedede"/></svg>
<div style="position:absolute;left:1424.7px;top:929.7px;width:31px;height:60.3px;background:#6ab200;border-radius:3px 3px 0 0"></div>
<div style="position:absolute;left:1470px;top:952.3px;width:31px;height:37.7px;background:#6ab200;border-radius:3px 3px 0 0"></div>
<div style="position:absolute;left:1515px;top:937px;width:31px;height:53.0px;background:#6ab200;border-radius:3px 3px 0 0"></div>
<div style="position:absolute;left:1560.5px;top:927.4px;width:31px;height:62.6px;background:#6ab200;border-radius:3px 3px 0 0"></div>
<div style="position:absolute;left:1606px;top:920.5px;width:31px;height:69.5px;background:#56a000;border-radius:3px 3px 0 0"></div>
<div style="position:absolute;left:1651px;top:939px;width:31px;height:51.0px;background:#6ab200;border-radius:3px 3px 0 0"></div>
<div style="position:absolute;left:1696.4px;top:947px;width:31px;height:43.0px;background:#6ab200;border-radius:3px 3px 0 0"></div>
<div style="position:absolute;left:1741px;top:953px;width:31px;height:37.0px;background:#6ab200;border-radius:3px 3px 0 0"></div>
<div style="position:absolute;left:1786.5px;top:935.8px;width:31px;height:54.2px;background:#6ab200;border-radius:3px 3px 0 0"></div>
<div style="position:absolute;left:1831.6px;top:927.4px;width:31px;height:62.6px;background:#6ab200;border-radius:3px 3px 0 0"></div>
<div style="position:absolute;left:1877px;top:940px;width:31px;height:50.0px;background:#6ab200;border-radius:3px 3px 0 0"></div>
<div style="position:absolute;left:1922.4px;top:943.6px;width:31px;height:46.4px;background:#6ab200;border-radius:3px 3px 0 0"></div>
<svg style="position:absolute;left:1703.600px;top:932.900px" width="17" height="10"><path d="M1 0H16a.7.700 0 0 1 .5 1.200L9.100 9.300a.8.800 0 0 1-1.200 0L.5 1.200A.7.700 0 0 1 1 0z" fill="#111"/></svg>
<span class="t" style="left:1424.16px;top:1000.85px;font-size:20.5px;color:#222;letter-spacing:-1.312px;">Ene</span>
<span class="t" style="left:1922.86px;top:1000.85px;font-size:20.5px;color:#222;letter-spacing:-0.434px;">Dic</span>
<div class="card" style="left:1400.6px;top:1079.300px;width:1152.6px;height:163.300px"></div>
<span class="t" style="left:1431.48px;top:1112.93px;font-size:29.5px;font-weight:700;color:#0b2559;letter-spacing:-0.294px;">Intención de búsqueda</span>
<div class="hl" style="left:1400.6px;top:1174.500px;width:1152.6px;background:#f1f1f1"></div>
<div class="vl" style="left:1687.8px;top:1176px;height:66.500px;background:#e8e8e8"></div>
<div class="vl" style="left:1975.8px;top:1176px;height:66.500px;background:#e8e8e8"></div>
<div class="vl" style="left:2263.5px;top:1176px;height:66.500px;background:#e8e8e8"></div>
<span class="t" style="left:1418.90px;top:1195.42px;font-size:28.8px;letter-spacing:-0.464px;">Do</span>
<div class="bar" style="left:1547.5px;top:1199.600px;width:120px;height:20px;box-shadow:inset 0 1px 3px rgba(0,0,0,.16)"><i style="width:120px;background:#1368d6"></i></div>
<span class="t" style="left:1707.70px;top:1195.42px;font-size:28.8px;letter-spacing:-0.332px;">Know</span>
<div class="bar" style="left:1835.5px;top:1199.600px;width:120px;height:20px;box-shadow:inset 0 1px 3px rgba(0,0,0,.16)"><i style="width:0px;background:#1368d6"></i></div>
<span class="t" style="left:1998.26px;top:1195.42px;font-size:28.8px;letter-spacing:-0.571px;">Website</span>
<div class="bar" style="left:2124px;top:1199.600px;width:120px;height:20px;box-shadow:inset 0 1px 3px rgba(0,0,0,.16)"><i style="width:0px;background:#1368d6"></i></div>
<span class="t" style="left:2285.66px;top:1195.42px;font-size:28.8px;letter-spacing:0.086px;">Visit</span>
<div class="bar" style="left:2412.5px;top:1199.600px;width:120px;height:20px;box-shadow:inset 0 1px 3px rgba(0,0,0,.16)"><i style="width:0px;background:#1368d6"></i></div>
<div class="card" style="left:1400.6px;top:1290.7px;width:1152.6px;height:700px"></div>
<span class="t" style="left:1432.52px;top:1325.83px;font-size:29.5px;font-weight:700;color:#0b2559;letter-spacing:-0.896px;">SERPs - zapatos mujer</span>
<div class="hl" style="left:1400.6px;top:1386.500px;width:1152.6px;background:#f1f1f1"></div>
<div style="position:absolute;left:1400.6px;top:1457.0px;width:1152.6px;height:68.15px;background:#f9f9f9;border-bottom:2px solid #efefef"></div>
<span class="t" style="left:1435.68px;top:1474.12px;font-size:28.8px;">1</span>
<svg style="position:absolute;left:1500.00px;top:1478.10px;" width="28" height="28.3" fill="#888" stroke="#888"><use href="#ext"/></svg>
<svg style="position:absolute;left:1543.00px;top:1478.70px;" width="24.6" height="27.6" fill="#0a8040" stroke="#0a8040"><use href="#lock"/></svg>
<span class="t" style="left:1577.93px;top:1475.62px;font-size:28.8px;letter-spacing:-0.228px;"><span style="color:#888">m.zalando.es</span>/calzado-de-mujer/</span>
<span class="t" style="left:2192.70px;top:1474.12px;font-size:28.8px;letter-spacing:-0.263px;">9.956</span>
<div class="bar" style="left:2283.800px;top:1478.0px;width:100.200px;height:20.300px"><i style="width:100px;background:#1368d6"></i></div>
<svg style="position:absolute;left:2426.70px;top:1478.10px;" width="28.2" height="20.7" fill="#888" stroke="#888"><use href="#chart"/></svg>
<svg style="position:absolute;left:2506.00px;top:1476.50px;" width="25" height="24" fill="#888" stroke="#888"><use href="#arrow"/></svg>
<div class="vl" style="left:2482px;top:1459.0px;height:64.15px;background:#efefef"></div>
<div style="position:absolute;left:1400.6px;top:1525.2px;width:1152.6px;height:68.15px;background:#fff;border-bottom:2px solid #efefef"></div>
<span class="t" style="left:1436.12px;top:1542.27px;font-size:28.8px;">2</span>
<svg style="position:absolute;left:1500.00px;top:1546.25px;" width="28" height="28.3" fill="#888" stroke="#888"><use href="#ext"/></svg>
<svg style="position:absolute;left:1543.00px;top:1546.85px;" width="24.6" height="27.6" fill="#0a8040" stroke="#0a8040"><use href="#lock"/></svg>
<span class="t" style="left:1579.80px;top:1543.77px;font-size:28.8px;letter-spacing:-0.328px;"><span style="color:#888">www.megacalzado.com</span>/calzado-mu...</span>
<span class="t" style="left:2193.42px;top:1542.27px;font-size:28.8px;letter-spacing:-0.371px;">4.792</span>
<div class="bar" style="left:2283.800px;top:1546.2px;width:100.200px;height:20.300px"><i style="width:48.1px;background:#1368d6"></i></div>
<svg style="position:absolute;left:2426.70px;top:1546.25px;" width="28.2" height="20.7" fill="#888" stroke="#888"><use href="#chart"/></svg>
<svg style="position:absolute;left:2506.00px;top:1544.65px;" width="25" height="24" fill="#888" stroke="#888"><use href="#arrow"/></svg>
<div class="vl" style="left:2482px;top:1527.2px;height:64.15px;background:#efefef"></div>
<div style="position:absolute;left:1400.6px;top:1593.3px;width:1152.6px;height:68.15px;background:#f9f9f9;border-bottom:2px solid #efefef"></div>
<span class="t" style="left:1436.13px;top:1610.42px;font-size:28.8px;">3</span>
<svg style="position:absolute;left:1500.00px;top:1614.40px;" width="28" height="28.3" fill="#888" stroke="#888"><use href="#ext"/></svg>
<svg style="position:absolute;left:1543.00px;top:1615.00px;" width="24.6" height="27.6" fill="#0a8040" stroke="#0a8040"><use href="#lock"/></svg>
<span class="t" style="left:1579.80px;top:1611.92px;font-size:28.8px;letter-spacing:-0.145px;"><span style="color:#888">www.elcorteingles.es</span>/moda/zapato...</span>
<span class="t" style="left:2192.85px;top:1610.42px;font-size:28.8px;letter-spacing:-0.299px;">3.293</span>
<div class="bar" style="left:2283.800px;top:1614.3px;width:100.200px;height:20.300px"><i style="width:33px;background:#1368d6"></i></div>
<svg style="position:absolute;left:2426.70px;top:1614.40px;" width="28.2" height="20.7" fill="#888" stroke="#888"><use href="#chart"/></svg>
<svg style="position:absolute;left:2506.00px;top:1612.80px;" width="25" height="24" fill="#888" stroke="#888"><use href="#arrow"/></svg>
<div class="vl" style="left:2482px;top:1595.3px;height:64.15px;background:#efefef"></div>
<div style="position:absolute;left:1400.6px;top:1661.5px;width:1152.6px;height:68.15px;background:#fff;border-bottom:2px solid #efefef"></div>
<span class="t" style="left:1436.28px;top:1678.57px;font-size:28.8px;">4</span>
<svg style="position:absolute;left:1500.00px;top:1682.55px;" width="28" height="28.3" fill="#888" stroke="#888"><use href="#ext"/></svg>
<svg style="position:absolute;left:1543.00px;top:1683.15px;" width="24.6" height="27.6" fill="#0a8040" stroke="#0a8040"><use href="#lock"/></svg>
<span class="t" style="left:1579.80px;top:1680.07px;font-size:28.8px;letter-spacing:0.048px;"><span style="color:#888">www.hispanitas.com</span>/es/zapatos/m...</span>
<span class="t" style="left:2192.56px;top:1678.57px;font-size:28.8px;letter-spacing:-0.155px;">2.257</span>
<div class="bar" style="left:2283.800px;top:1682.5px;width:100.200px;height:20.300px"><i style="width:22.7px;background:#1368d6"></i></div>
<svg style="position:absolute;left:2426.70px;top:1682.55px;" width="28.2" height="20.7" fill="#888" stroke="#888"><use href="#chart"/></svg>
<svg style="position:absolute;left:2506.00px;top:1680.95px;" width="25" height="24" fill="#888" stroke="#888"><use href="#arrow"/></svg>
<div class="vl" style="left:2482px;top:1663.5px;height:64.15px;background:#efefef"></div>
<div style="position:absolute;left:1400.6px;top:1729.6px;width:1152.6px;height:68.15px;background:#f9f9f9;border-bottom:2px solid #efefef"></div>
<span class="t" style="left:1436.13px;top:1746.72px;font-size:28.8px;">5</span>
<svg style="position:absolute;left:1500.00px;top:1750.70px;" width="28" height="28.3" fill="#888" stroke="#888"><use href="#ext"/></svg>
<svg style="position:absolute;left:1543.00px;top:1751.30px;" width="24.6" height="27.6" fill="#0a8040" stroke="#0a8040"><use href="#lock"/></svg>
<span class="t" style="left:1579.51px;top:1748.22px;font-size:28.8px;letter-spacing:-0.266px;"><span style="color:#888">xtistore.com</span>/es_ES/mujer</span>
<span class="t" style="left:2192.56px;top:1746.72px;font-size:28.8px;letter-spacing:-0.299px;">2.014</span>
<div class="bar" style="left:2283.800px;top:1750.6px;width:100.200px;height:20.300px"><i style="width:20.2px;background:#1368d6"></i></div>
<svg style="position:absolute;left:2426.70px;top:1750.70px;" width="28.2" height="20.7" fill="#888" stroke="#888"><use href="#chart"/></svg>
<svg style="position:absolute;left:2506.00px;top:1749.10px;" width="25" height="24" fill="#888" stroke="#888"><use href="#arrow"/></svg>
<div class="vl" style="left:2482px;top:1731.6px;height:64.15px;background:#efefef"></div>
<div style="position:absolute;left:1400.6px;top:1797.8px;width:1152.6px;height:68.15px;background:#fff;border-bottom:2px solid #efefef"></div>
<span class="t" style="left:1435.98px;top:1814.87px;font-size:28.8px;">6</span>
<svg style="position:absolute;left:1500.00px;top:1818.85px;" width="28" height="28.3" fill="#888" stroke="#888"><use href="#ext"/></svg>
<svg style="position:absolute;left:1543.00px;top:1819.45px;" width="24.6" height="27.6" fill="#0a8040" stroke="#0a8040"><use href="#lock"/></svg>
<span class="t" style="left:1578.65px;top:1816.37px;font-size:28.8px;letter-spacing:-0.239px;"><span style="color:#888">catchalot.es</span>/es/1063-zapatos-de-m...</span>
<span class="t" style="left:2191.84px;top:1814.87px;font-size:28.8px;letter-spacing:-0.119px;">1.344</span>
<div class="bar" style="left:2283.800px;top:1818.8px;width:100.200px;height:20.300px"><i style="width:13.5px;background:#1368d6"></i></div>
<svg style="position:absolute;left:2426.70px;top:1818.85px;" width="28.2" height="20.7" fill="#888" stroke="#888"><use href="#chart"/></svg>
<svg style="position:absolute;left:2506.00px;top:1817.25px;" width="25" height="24" fill="#888" stroke="#888"><use href="#arrow"/></svg>
<div class="vl" style="left:2482px;top:1799.8px;height:64.15px;background:#efefef"></div>
<div style="position:absolute;left:1400.6px;top:1865.9px;width:1152.6px;height:68.15px;background:#f9f9f9;border-bottom:2px solid #efefef"></div>
<span class="t" style="left:1436.12px;top:1883.02px;font-size:28.8px;">7</span>
<svg style="position:absolute;left:1500.00px;top:1887.00px;" width="28" height="28.3" fill="#888" stroke="#888"><use href="#ext"/></svg>
<svg style="position:absolute;left:1543.00px;top:1887.60px;" width="24.6" height="27.6" fill="#0a8040" stroke="#0a8040"><use href="#lock"/></svg>
<span class="t" style="left:1579.80px;top:1884.52px;font-size:28.8px;letter-spacing:-0.395px;"><span style="color:#888">www.zapatosmayka.es</span>/calzado-muj...</span>
<span class="t" style="left:2191.84px;top:1883.02px;font-size:28.8px;letter-spacing:-0.011px;">1.089</span>
<div class="bar" style="left:2283.800px;top:1886.9px;width:100.200px;height:20.300px"><i style="width:10.9px;background:#1368d6"></i></div>
<svg style="position:absolute;left:2426.70px;top:1887.00px;" width="28.2" height="20.7" fill="#888" stroke="#888"><use href="#chart"/></svg>
<svg style="position:absolute;left:2506.00px;top:1885.40px;" width="25" height="24" fill="#888" stroke="#888"><use href="#arrow"/></svg>
<div class="vl" style="left:2482px;top:1867.9px;height:64.15px;background:#efefef"></div>
<div style="position:absolute;left:1400.6px;top:1388.500px;width:1152.6px;height:68.5px;background:#fff;box-shadow:0 4px 4px -2px rgba(0,0,0,.08);border-bottom:2px solid #d9d9d9"></div>
<span class="t" style="left:1492.92px;top:1407.10px;font-size:28px;font-weight:700;color:#666;letter-spacing:-2.140px;">URL</span>
<span class="t" style="left:2139.78px;top:1407.10px;font-size:28px;font-weight:700;color:#666;letter-spacing:-0.847px;">Estimación de clics</span>
<div class="vl" style="left:1472.2px;top:1388.500px;height:600px;background:#ebebeb"></div>
<div class="vl" style="left:2061.5px;top:1388.500px;height:600px;background:#ebebeb"></div>
<div class="vl" style="left:2403.8px;top:1388.500px;height:600px;background:#ebebeb"></div>
<div style="position:absolute;left:47.5px;top:485.500px;width:400.5px;height:1500px;background:#fff;box-shadow:2px 0 3px rgba(0,0,0,.10),4px 2px 9px rgba(0,0,0,.10),0 0 2px rgba(0,0,0,.06)"></div>
<div style="position:absolute;left:69.500px;top:506.500px;width:294.500px;height:70.500px;border:1.500px solid #dcdcdc;border-radius:6px;box-shadow:inset 0 2px 3px rgba(0,0,0,.09);background:#fff"></div>
<span class="t" style="left:93.46px;top:527.92px;font-size:28.8px;color:#505050;letter-spacing:-0.862px;">Volumen de búsc</span>
<svg style="position:absolute;left:336px;top:537px" width="18" height="11"><path d="M1.500 1.500L8.700 8.700L15.900 1.500" fill="none" stroke="#444" stroke-width="2.600"/></svg>
<svg style="position:absolute;left:420px;top:543.700px" width="18" height="10"><path d="M.8 9.500L8.700.6L16.700 9.500z" fill="#6ab200"/></svg>
<div style="position:absolute;left:47.5px;top:597.3px;width:400.5px;height:65.38px;background:#f9f9f9;border-top:2px solid #ebebeb"></div>
<span class="t" style="left:66.83px;top:616.12px;font-size:28.8px;color:#888;">mujer</span>
<div class="bar" style="left:329.200px;top:621.7px;width:98.800px;height:19.300px"><i style="width:98.8px;background:#1368d6"></i></div>
<div style="position:absolute;left:47.5px;top:662.7px;width:400.5px;height:65.38px;background:#fff;border-top:2px solid #ebebeb"></div>
<span class="t" style="left:67.55px;top:681.50px;font-size:28.8px;color:#888;">corte</span>
<div class="bar" style="left:329.200px;top:687.1px;width:98.800px;height:19.300px"><i style="width:64.8px;background:#1368d6"></i></div>
<div style="position:absolute;left:47.5px;top:728.1px;width:400.5px;height:65.38px;background:#f9f9f9;border-top:2px solid #ebebeb"></div>
<span class="t" style="left:66.68px;top:746.88px;font-size:28.8px;color:#888;">hombre</span>
<div class="bar" style="left:329.200px;top:752.5px;width:98.800px;height:19.300px"><i style="width:46.4px;background:#1368d6"></i></div>
<div style="position:absolute;left:47.5px;top:793.4px;width:400.5px;height:65.38px;background:#fff;border-top:2px solid #ebebeb"></div>
<span class="t" style="left:66.83px;top:812.26px;font-size:28.8px;color:#888;">niña</span>
<div class="bar" style="left:329.200px;top:817.8px;width:98.800px;height:19.300px"><i style="width:42.0px;background:#1368d6"></i></div>
<div style="position:absolute;left:47.5px;top:858.8px;width:400.5px;height:65.38px;background:#f9f9f9;border-top:2px solid #ebebeb"></div>
<span class="t" style="left:66.83px;top:877.64px;font-size:28.8px;color:#888;">inglés</span>
<div class="bar" style="left:329.200px;top:883.2px;width:98.800px;height:19.300px"><i style="width:42.0px;background:#1368d6"></i></div>
<div style="position:absolute;left:47.5px;top:924.2px;width:400.5px;height:65.38px;background:#fff;border-top:2px solid #ebebeb"></div>
<span class="t" style="left:66.83px;top:943.02px;font-size:28.8px;color:#888;">para</span>
<div class="bar" style="left:329.200px;top:948.6px;width:98.800px;height:19.300px"><i style="width:36.0px;background:#1368d6"></i></div>
<div style="position:absolute;left:47.5px;top:989.6px;width:400.5px;height:65.38px;background:#f9f9f9;border-top:2px solid #ebebeb"></div>
<span class="t" style="left:66.83px;top:1008.40px;font-size:28.8px;color:#888;">ingles</span>
<div class="bar" style="left:329.200px;top:1014.0px;width:98.800px;height:19.300px"><i style="width:24.4px;background:#1368d6"></i></div>
<div style="position:absolute;left:47.5px;top:1055.0px;width:400.5px;height:65.38px;background:#fff;border-top:2px solid #ebebeb"></div>
<span class="t" style="left:67.55px;top:1073.78px;font-size:28.8px;color:#888;">zara</span>
<div class="bar" style="left:329.200px;top:1079.4px;width:98.800px;height:19.300px"><i style="width:19.6px;background:#1368d6"></i></div>
<div style="position:absolute;left:47.5px;top:1120.3px;width:400.5px;height:65.38px;background:#f9f9f9;border-top:2px solid #ebebeb"></div>
<span class="t" style="left:66.83px;top:1139.16px;font-size:28.8px;color:#888;">niño</span>
<div class="bar" style="left:329.200px;top:1144.7px;width:98.800px;height:19.300px"><i style="width:19.6px;background:#1368d6"></i></div>
<div style="position:absolute;left:47.5px;top:1185.7px;width:400.5px;height:65.38px;background:#fff;border-top:2px solid #ebebeb"></div>
<span class="t" style="left:66.83px;top:1204.54px;font-size:28.8px;color:#888;">niños</span>
<div class="bar" style="left:329.200px;top:1210.1px;width:98.800px;height:19.300px"><i style="width:13.6px;background:#1368d6"></i></div>
<div style="position:absolute;left:47.5px;top:1251.1px;width:400.5px;height:65.38px;background:#f9f9f9;border-top:2px solid #ebebeb"></div>
<span class="t" style="left:66.83px;top:1269.92px;font-size:28.8px;color:#888;">bebe</span>
<div class="bar" style="left:329.200px;top:1275.5px;width:98.800px;height:19.300px"><i style="width:10.7px;background:#1368d6"></i></div>
<div style="position:absolute;left:47.5px;top:1316.5px;width:400.5px;height:65.38px;background:#fff;border-top:2px solid #ebebeb"></div>
<span class="t" style="left:67.55px;top:1335.30px;font-size:28.8px;color:#888;">outlet</span>
<div class="bar" style="left:329.200px;top:1340.9px;width:98.800px;height:19.300px"><i style="width:10.7px;background:#1368d6"></i></div>
<div style="position:absolute;left:47.5px;top:1381.9px;width:400.5px;height:65.38px;background:#f9f9f9;border-top:2px solid #ebebeb"></div>
<span class="t" style="left:68.27px;top:1400.68px;font-size:28.8px;color:#888;">tacon</span>
<div class="bar" style="left:329.200px;top:1406.3px;width:98.800px;height:19.300px"><i style="width:8.9px;background:#1368d6"></i></div>
<div style="position:absolute;left:47.5px;top:1447.2px;width:400.5px;height:65.38px;background:#fff;border-top:2px solid #ebebeb"></div>
<span class="t" style="left:68.27px;top:1466.06px;font-size:28.8px;color:#888;">tacón</span>
<div class="bar" style="left:329.200px;top:1471.6px;width:98.800px;height:19.300px"><i style="width:8.2px;background:#1368d6"></i></div>
<div style="position:absolute;left:47.5px;top:1512.6px;width:400.5px;height:65.38px;background:#f9f9f9;border-top:2px solid #ebebeb"></div>
<span class="t" style="left:67.55px;top:1531.44px;font-size:28.8px;color:#888;">online</span>
<div class="bar" style="left:329.200px;top:1537.0px;width:98.800px;height:19.300px"><i style="width:7.9px;background:#1368d6"></i></div>
<div style="position:absolute;left:47.5px;top:1578.0px;width:400.5px;height:65.38px;background:#fff;border-top:2px solid #ebebeb"></div>
<span class="t" style="left:67.84px;top:1596.82px;font-size:28.8px;color:#888;">seguridad</span>
<div class="bar" style="left:329.200px;top:1602.4px;width:98.800px;height:19.300px"><i style="width:7.4px;background:#1368d6"></i></div>
<div style="position:absolute;left:47.5px;top:1643.4px;width:400.5px;height:65.38px;background:#f9f9f9;border-top:2px solid #ebebeb"></div>
<span class="t" style="left:66.83px;top:1662.20px;font-size:28.8px;color:#888;">novia</span>
<div class="bar" style="left:329.200px;top:1667.8px;width:98.800px;height:19.300px"><i style="width:7.1px;background:#1368d6"></i></div>
<div style="position:absolute;left:47.5px;top:1708.8px;width:400.5px;height:65.38px;background:#fff;border-top:2px solid #ebebeb"></div>
<span class="t" style="left:67.55px;top:1727.58px;font-size:28.8px;color:#888;">amazon</span>
<div class="bar" style="left:329.200px;top:1733.2px;width:98.800px;height:19.300px"><i style="width:7.1px;background:#1368d6"></i></div>
<div style="position:absolute;left:47.5px;top:1774.1px;width:400.5px;height:65.38px;background:#f9f9f9;border-top:2px solid #ebebeb"></div>
<span class="t" style="left:66.83px;top:1792.96px;font-size:28.8px;color:#888;">baratos</span>
<div class="bar" style="left:329.200px;top:1798.5px;width:98.800px;height:19.300px"><i style="width:6.4px;background:#1368d6"></i></div>
<div style="position:absolute;left:47.5px;top:1839.5px;width:400.5px;height:65.38px;background:#fff;border-top:2px solid #ebebeb"></div>
<span class="t" style="left:66.83px;top:1858.34px;font-size:28.8px;color:#888;">marcas</span>
<div class="bar" style="left:329.200px;top:1863.9px;width:98.800px;height:19.300px"><i style="width:6.4px;background:#1368d6"></i></div>
<div style="position:absolute;left:47.5px;top:1904.9px;width:400.5px;height:65.38px;background:#f9f9f9;border-top:2px solid #ebebeb"></div>
<div class="bar" style="left:329.200px;top:1929.3px;width:98.800px;height:19.300px"><i style="width:5.9px;background:#1368d6"></i></div>
<div class="vl" style="left:306.500px;top:597.3px;height:1400px;background:#ebebeb"></div>
<svg style="position:absolute;left:420px;top:630.800px" width="18" height="10"><path d="M.8.500L8.700 9.400L16.700.500z" fill="#6ab200"/></svg>
</body></html>
